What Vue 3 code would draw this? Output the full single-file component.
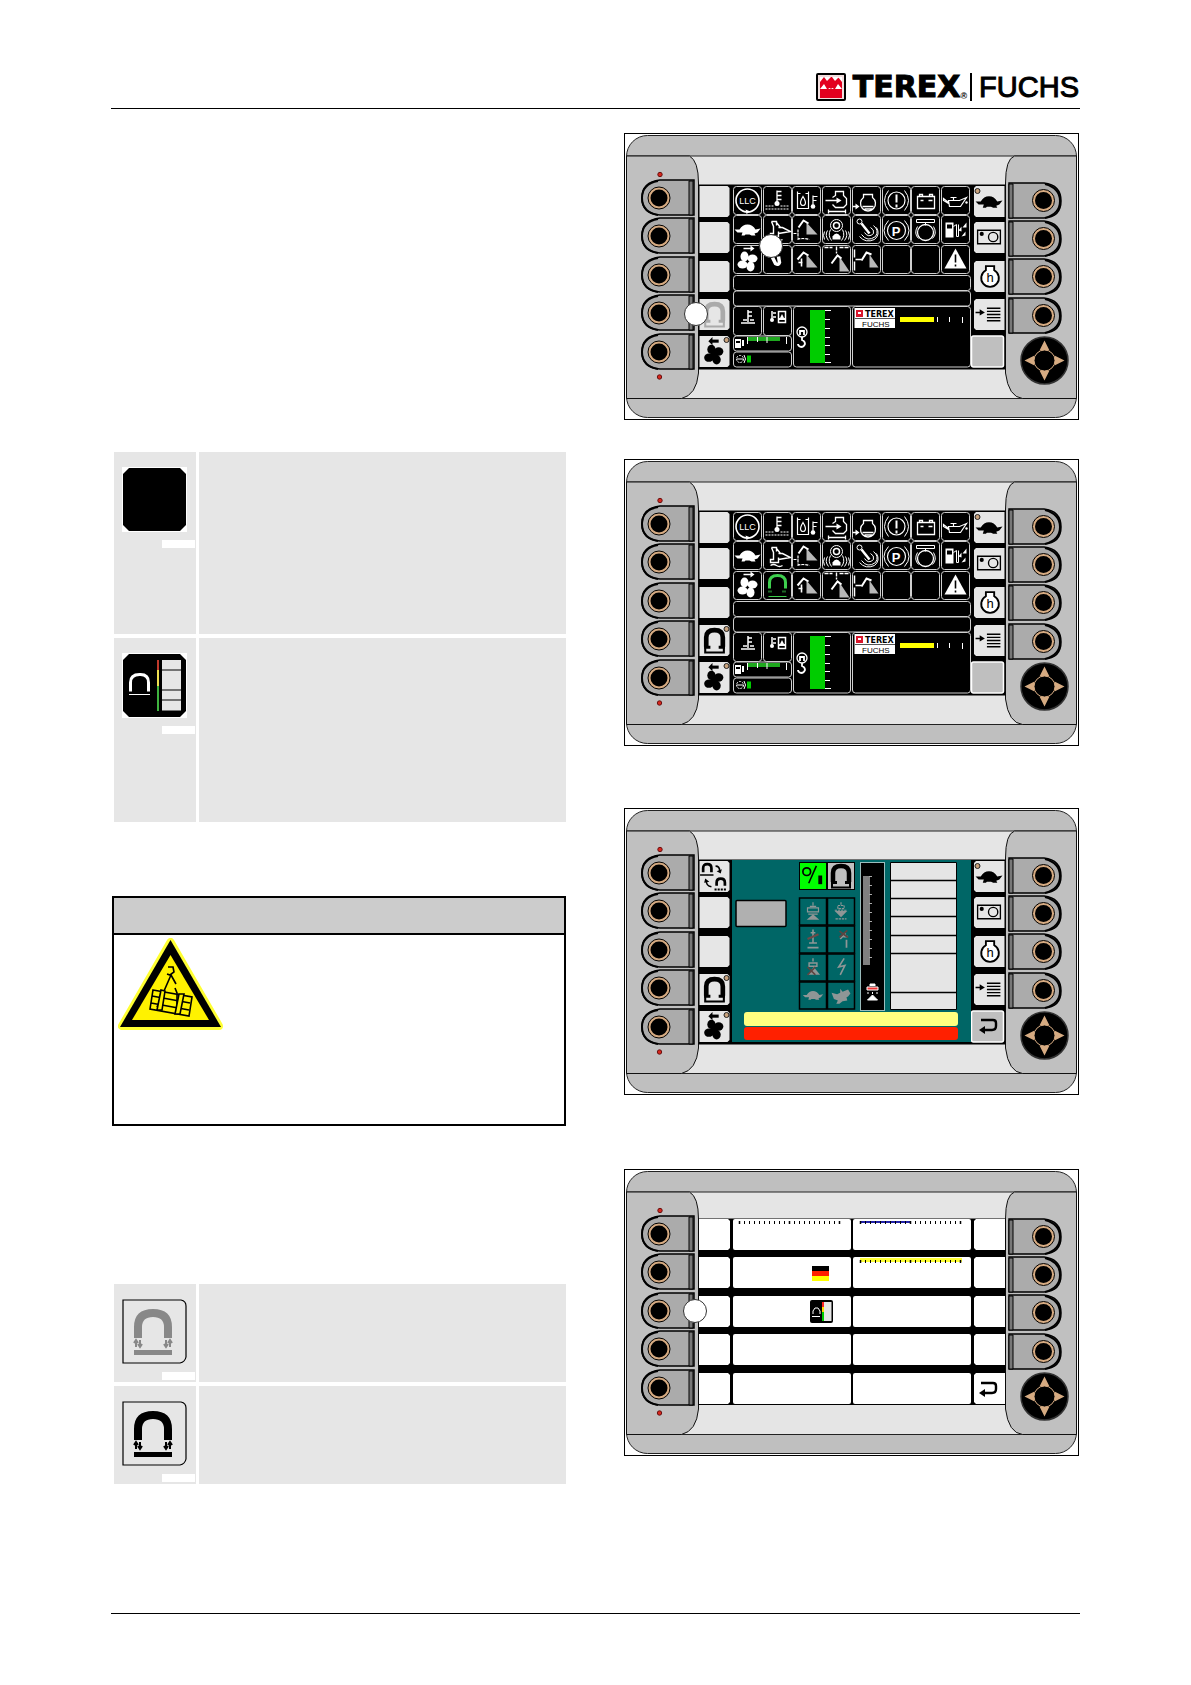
<template>
  <div class="page">
    <!-- 图标定义 -->
    <svg class="defs" aria-hidden="true">
      <symbol id="i-llc" viewBox="0 0 28 28">
        <circle cx="14" cy="14" r="11.500" class="ln" stroke-width="1.600" />
        <path d="M12 23l5 2-4 2.500z" class="fl" />
      </symbol>
      <symbol id="i-coolant" viewBox="0 0 28 28">
        <path d="M13.500 4v14M14 5h4M14 9h4M14 13h4" class="ln" stroke-width="1.300" />
        <circle cx="13.500" cy="17" r="2.500" class="fl" />
        <path d="M2 19.500h8M17 19.500h9M2 22.500h24" class="ln" stroke-dasharray="2 1" />
      </symbol>
      <symbol id="i-hyd" viewBox="0 0 28 28">
        <path d="M5 5v17h11V5M5 7h3M13 7h3M20.500 9v12M21 10h4M21 14h3" class="ln" stroke-width="1.200" />
        <path d="M10.500 10c-5 8-1 9 0 9s5-1 0-9z" class="ln" stroke-width="1.200" />
        <circle cx="20.500" cy="20" r="2.300" class="fl" />
      </symbol>
      <symbol id="i-engine" viewBox="0 0 28 28">
        <path d="M10 11l3-2V5h8v4l3 3v6l-3 3h-8l-3-3M3 14h12M6 25h17M6 23v4M23 23v4" class="ln" stroke-width="1.300" />
        <path d="M14 11l5 3-5 3z" class="fl" />
      </symbol>
      <symbol id="i-oillevel" viewBox="0 0 28 28">
        <path d="M11 8h9v3a7.500 7.500 0 1 1-9 0zM0 20h4M10 20h11M12 22.500h8" class="ln" stroke-width="1.300" />
        <path d="M3 17l4 3-4 3z" class="fl" />
      </symbol>
      <symbol id="i-brake" viewBox="0 0 28 28">
        <circle cx="14" cy="14" r="8.500" class="ln" stroke-width="1.200" />
        <path d="M6 4q-8 10 0 20M22 4q8 10 0 20" class="ln" />
        <path d="M14 8v8M14 18v3" class="ln" stroke-width="2" />
      </symbol>
      <symbol id="i-battery" viewBox="0 0 28 28">
        <path d="M6 10h17v12H6zM8 10V8h3v2M18 10V8h3v2M9 14h3M17 14h4" class="ln" stroke-width="1.300" />
      </symbol>
      <symbol id="i-oilcan" viewBox="0 0 28 28">
        <path d="M7 14h11l7-3-6 9H8zM7 16l-5-4v2l5 3M12 14v-3M9 11h6" class="ln" stroke-width="1.200" />
        <circle cx="25" cy="16" r="1.200" class="fl" />
      </symbol>
      <symbol id="i-turtle" viewBox="0 0 28 28">
        <path d="M1 14h5q3-5 8-5t8 5l5-1-3 4-3 1 1 2h-4l-2-1h-4l-1 1H8l1-3H4z" class="fl" />
      </symbol>
      <symbol id="i-hare" viewBox="0 0 28 28">
        <path d="M2 11l7 2 4-2 0-5 3 4 7-3 3 5-3 4-2 1 1 4-6 1-4 3-4 0 2-4-5-2z" class="fl" />
      </symbol>
      <symbol id="i-cab" viewBox="0 0 28 28">
        <path d="M8 6h5v4M8 6l2 5v7H7v3h8v-5M15 12h4l8 4-12 2M17 12l-4-5M7 24q3-2 6 0t6 0" class="ln" stroke-width="1.400" />
      </symbol>
      <symbol id="i-boom1" viewBox="0 0 28 28">
        <path d="M14 7l11 12H14z" fill="#b8b8b8" />
        <path d="M6 12l5-7 5 3" class="ln" stroke-width="2" />
        <path d="M5.500 14v9M1 18h5M5 24q5-2 12 0" class="ln" stroke-width="1.200" stroke-dasharray="3 1" />
      </symbol>
      <symbol id="i-boom2" viewBox="0 0 28 28">
        <path d="M14 9l11 13H14z" fill="#b8b8b8" />
        <path d="M5 14l6-7 5 3" class="ln" stroke-width="2" />
        <path d="M9 13v8M6 17h4" class="ln" stroke-width="1.600" />
      </symbol>
      <symbol id="i-boom3" viewBox="0 0 28 28">
        <path d="M17 11l10 15H17z" fill="#b8b8b8" />
        <path d="M9 18l6-8 4 3" class="ln" stroke-width="2" />
        <path d="M2 2h8M17 2h9M14 1v7" class="ln" stroke-width="1.400" stroke-dasharray="4 1" />
      </symbol>
      <symbol id="i-boom4" viewBox="0 0 28 28">
        <path d="M17 9l9 13H17z" fill="#b8b8b8" />
        <path d="M9 15l5-8 5 2" class="ln" stroke-width="2" />
        <path d="M2 4v8M2 16v9M3 14h6" class="ln" stroke-width="1.500" />
      </symbol>
      <symbol id="i-vibe" viewBox="0 0 28 28">
        <circle cx="14" cy="10" r="6" class="ln" />
        <circle cx="14" cy="10" r="3" class="ln" stroke-width="1.500" />
        <path d="M10 21q4-6 8 0v3h-8z" class="fl" />
        <path d="M8 14q-3 6 1 11M5 15q-3 5 1 10M2 16q-2 4 0 8M20 14q3 6-1 11M23 15q3 5-1 10M26 16q2 4 0 8" class="ln" />
      </symbol>
      <symbol id="i-joystick" viewBox="0 0 28 28">
        <circle cx="7" cy="6" r="2.500" class="ln" />
        <path d="M9 8l8 10" class="ln" stroke-width="2.500" />
        <path d="M18 12q4 2 3 6-5 5-9-1M21 10q6 5 2 11-8 6-14-2M24 12q4 7-2 12-9 4-15-3" class="ln" />
      </symbol>
      <symbol id="i-park" viewBox="0 0 28 28">
        <circle cx="14" cy="15" r="9" class="ln" stroke-width="1.200" />
        <path d="M6 5q-9 10 0 20M22 5q9 10 0 20" class="ln" />
      </symbol>
      <symbol id="i-swing" viewBox="0 0 28 28">
        <circle cx="14" cy="17" r="8" class="ln" stroke-width="1.300" />
        <path d="M5 4h18v3H5zM14 7v3M6 11q-4 7 1 12M22 11q4 7-1 12" class="ln" />
      </symbol>
      <symbol id="i-fuel" viewBox="0 0 28 28">
        <path d="M4 7h8v15H4zM17 15l3-4v5zM21 12l4-5v5zM20 21l4-5v4z" class="fl" />
        <path d="M5.500 9h5v4h-5z" fill="#000" />
        <path d="M12 11l3-2v12h2V9" class="ln" />
      </symbol>
      <symbol id="i-fan" viewBox="0 0 28 28">
        <g class="fl">
          <ellipse cx="11" cy="11" rx="4" ry="5" />
          <ellipse cx="19" cy="13" rx="5" ry="4" />
          <ellipse cx="17" cy="21" rx="4" ry="5" />
          <ellipse cx="9" cy="19" rx="5" ry="4" />
          <path d="M17 0l4 3-4 3z" />
        </g>
        <path d="M10 3h8" class="ln" stroke-width="1.500" />
      </symbol>
      <symbol id="i-fankey" viewBox="0 0 28 28">
        <g class="fl">
          <ellipse cx="12" cy="12" rx="4" ry="4.500" />
          <ellipse cx="19" cy="14" rx="4.500" ry="4" />
          <ellipse cx="17" cy="22" rx="4" ry="4.500" />
          <ellipse cx="9.500" cy="20" rx="4.500" ry="4" />
          <path d="M11 13l7-1 1 9-7 2zM9 4l4-4v8z" />
        </g>
        <path d="M12 4h7" class="ln" stroke-width="3" />
      </symbol>
      <symbol id="i-magnet" viewBox="0 0 28 28">
        <path d="M6 17v-6q0-7 8-7t8 7v6" class="ln" stroke-width="3" />
        <path d="M5 20h4M19 20h4" class="ln" stroke-width="2" stroke-dasharray="1 1" />
        <path d="M5 25h18" class="ln" />
      </symbol>
      <symbol id="i-grab" viewBox="0 0 28 28">
        <path d="M9 12l3 6q3 2 4-1l-1-6" class="ln" stroke-width="3.500" />
      </symbol>
      <symbol id="i-magnetkey" viewBox="0 0 28 28">
        <path d="M7 20V11q0-7 8-7t8 7v9" class="ln" stroke-width="4.500" />
        <path d="M5 25.500h20M6 19v6M24 19v6" class="ln" stroke-width="2" />
        <path d="M5 19h6v3H5zM19 19h6v3h-6z" class="fl" />
      </symbol>
      <symbol id="i-magnetswap" viewBox="0 0 28 28">
        <path d="M4 10V6q0-4 4-4t4 4v4M17 23v-3q0-4 4-4t4 4v3" class="ln" stroke-width="2.600" />
        <path d="M1 12.500h13M16 4q4 0 4 5M12 24q-5-1-5-6" class="ln" stroke-width="1.500" />
        <path d="M15 26.500h12" class="ln" stroke-width="2" stroke-dasharray="2 1" />
        <path d="M22 7l-1 4-4-2zM5 20l1-4 4 3z" class="fl" />
      </symbol>
      <symbol id="i-warn" viewBox="0 0 28 28">
        <path d="M14 3l11 20H3z" class="fl" />
        <path d="M14 9v8M14 19v2" stroke="#000" stroke-width="1.600" />
      </symbol>
      <symbol id="i-camera" viewBox="0 0 28 28">
        <path d="M3 7h22v13H3z" class="ln" stroke-width="1.300" />
        <circle cx="18" cy="13.500" r="4.500" class="ln" stroke-width="1.300" />
        <circle cx="7" cy="10.500" r="2" class="fl" />
      </symbol>
      <symbol id="i-hours" viewBox="0 0 28 28">
        <path d="M11 4h8v4a8.500 8.500 0 1 1-8 0z" fill="#fff" stroke="#000" stroke-width="1.800" />
      </symbol>
      <symbol id="i-list" viewBox="0 0 28 28">
        <path d="M12 8h13M12 11h13M12 14h13M12 17h13M12 20h13" class="ln" stroke-width="1.300" />
        <path d="M1 12h5" class="ln" stroke-width="1.500" />
        <path d="M5 9l5 3-5 3z" class="fl" />
      </symbol>
      <symbol id="i-back" viewBox="0 0 28 28">
        <path d="M7 8h12q3 0 3 3v3q0 4-4 4H10" class="ln" stroke-width="2.400" />
        <path d="M5 18l6-4v8z" class="fl" />
      </symbol>
      <symbol id="i-hook" viewBox="0 0 28 28">
        <circle cx="14" cy="9" r="5" class="ln" stroke-width="1.300" />
        <path d="M12 12V8h4v4M14 14v3q3 1 3 4-1 3-4 3-3-1-3-3" class="ln" stroke-width="1.800" />
      </symbol>
      <symbol id="i-plateup" viewBox="0 0 28 28">
        <path d="M14 3v4M10 8h8M7 10h14v5H7zM8 18h12" class="ln" stroke-width="1.500" />
        <path d="M14 18l8 7H6z" class="fl" />
      </symbol>
      <symbol id="i-platedown" viewBox="0 0 28 28">
        <path d="M14 3v3M10 7h8v4h-8zM6 13h16M7 24h14" class="ln" stroke-width="1.500" stroke-dasharray="3 1" />
        <path d="M6 14h16l-8 8z" class="fl" />
      </symbol>
      <symbol id="i-post" viewBox="0 0 28 28">
        <path d="M14 2v18M11 6h6M9 19h10M7 25h14" class="ln" stroke-width="2" />
        <path d="M7 14l14-6" stroke="#6b4a48" stroke-width="3" />
      </symbol>
      <symbol id="i-cross" viewBox="0 0 28 28">
        <path d="M13 14l7-7M21 15v10M17 11h6" class="ln" stroke-width="2.200" />
        <path d="M12 4l11 8M22 3L12 12" stroke="#5e4440" stroke-width="2.200" />
      </symbol>
      <symbol id="i-cross2" viewBox="0 0 28 28">
        <path d="M14 3v4M9 9h10v4H9z" class="ln" stroke-width="1.800" />
        <path d="M15 14l8 10H7z" class="fl" />
        <path d="M7 14l10 10M17 14L7 24" stroke="#5e4440" stroke-width="2" />
      </symbol>
      <symbol id="i-bolt" viewBox="0 0 28 28">
        <path d="M18 3l-7 11 8-2-6 12" class="ln" stroke-width="2" />
      </symbol>
      <symbol id="i-percent" viewBox="0 0 28 28">
        <circle cx="7" cy="10" r="4" class="ln" stroke-width="1.800" />
        <path d="M17 4L9 22" class="ln" stroke-width="1.600" />
        <path d="M19 14h4v9h-4z" class="fl" />
      </symbol>
    </svg>

    <header class="header">
      <svg class="logo-mark" viewBox="0 0 30 28" role="img" aria-label="Logo">
        <rect x="1" y="1" width="28" height="26" rx="1" fill="#f2dede" stroke="#000" stroke-width="2" />
        <path d="M4 4h22v21H4z" fill="#e3001f" />
        <path d="M4 4h4l-4 5zM11 8l4-4h-7zM19 8l4-4h-7zM26 4v5l-4-5zM4 16l4-5 3 5zM12 16h6l-3-2zM19 16l3-5 4 5z" fill="#fff" />
        <path d="M9 11l6-6 6 6-6 5z" fill="#e3001f" />
      </svg>
      <span class="logo-terex">TEREX</span>
      <span class="logo-reg">®</span>
      <span class="logo-fuchs">FUCHS</span>
    </header>

    <main class="content">
      <section class="col-left">
        <div class="table table-top">
          <div class="row" v-for="kind in ['blank', 'gauge']" :key="kind">
            <div class="cell-icon">
              <svg class="tile" viewBox="0 0 65 65">
                <rect width="65" height="65" fill="#fff" />
                <path d="M7 1h51l6 6v51l-6 6H7l-6-6V7z" />
                <g v-if="kind === 'gauge'">
                  <path d="M8.500 38.500v-9q0-8 9-8h1q8 0 8 8v9" fill="none" stroke="#fff" stroke-width="3" />
                  <path d="M7 41.500h21" stroke="#fff" />
                  <path d="M36 7v10" stroke="#c0392b" stroke-width="2" />
                  <path d="M36 17v16" stroke="#f0e050" stroke-width="2" />
                  <path d="M36 33v25" stroke="#3fb33f" stroke-width="2" />
                  <path d="M40 7h19v9.500H40zM40 17.500h19v19H40zM40 37.500h19v9H40zM40 47.500h19v10H40z" fill="#e6e6e6" />
                </g>
              </svg>
              <span class="tag"></span>
            </div>
            <div class="cell-text"></div>
          </div>
        </div>

        <div class="warning">
          <div class="warning-head"></div>
          <div class="warning-body">
            <svg class="hazard" viewBox="0 0 105 93" role="img" aria-label="Suspended load">
              <path d="M52.500 4L4 88h97z" fill="#ff3" stroke="#ff3" stroke-width="8" stroke-linejoin="round" />
              <path d="M52.500 2L2 89h101z" />
              <path d="M52.500 17L14 82h77z" fill="#fff200" />
              <g fill="none" stroke="#000" stroke-width="1.600">
                <path d="M50 29h5l1 5-4 3-3-1M53 37l-14 32M53 37l5 9M57 50l2 5v17" />
                <path d="M35 52l39 7-3 19-39-7zM34 58l38 7M33 65l38 7" />
                <path d="M43 52l-4 20h5l3-19zM61 56l-4 20h5l4-20z" fill="#fff200" />
              </g>
            </svg>
          </div>
        </div>

        <div class="table table-bottom">
          <div class="row" v-for="color in ['#888888', '#000000']" :key="color">
            <div class="cell-icon">
              <svg class="tile" viewBox="0 0 65 65">
                <path d="M1 1h58q5 1 5 6v51q-1 5-6 6H1z" fill="#e6e6e6" stroke="#000" stroke-width="1.200" />
                <path d="M16 39V28q0-14 15-14t15 14v11" fill="none" :stroke="color" stroke-width="8" />
                <path d="M12 51h38v5H12z" :fill="color" />
                <path d="M14 48v-6m-2 2l2-3 2 3M18 41v6m-2-2l2 3 2-3M44 41v6m-2-2l2 3 2-3M48 48v-6m-2 2l2-3 2 3" fill="none" :stroke="color" stroke-width="2" />
              </svg>
              <span class="tag"></span>
            </div>
            <div class="cell-text"></div>
          </div>
        </div>
      </section>

      <section class="col-right">
        <figure class="device" v-for="(dev, idx) in devices" :key="idx">
          <svg viewBox="0 0 455 287">
            <rect x="0.500" y="0.500" width="454" height="286" fill="#fff" stroke="#000" />
            <!-- 机身 -->
            <rect x="2.500" y="2.500" width="450" height="282" rx="21" fill="#bfbfbf" stroke="#222" />
            <path d="M2.500 23v242.500h450V23z" fill="#e5e5e5" stroke="#222" />
            <path d="M2.500 23h63q9 5 9 27v190q-2 22-17 25.500h-55z" fill="#c0c0c0" stroke="#111" />
            <path d="M452.500 23h-62q-9 3-9 27v190q3 24 17 25.500h54z" fill="#c0c0c0" stroke="#111" />
            <circle cx="36" cy="41.500" r="2.200" fill="#d8261c" stroke="#611" />
            <circle cx="35.500" cy="244" r="2.200" fill="#d8261c" stroke="#611" />

            <!-- 左侧按键 -->
            <g v-for="n in 5" :key="'l' + n" :transform="`translate(17 ${Math.floor(47.5 + (n - 1) * 38.4)})`">
              <path d="M53 0H19Q1 2 1 18t18 17h34z" fill="#ababab" stroke="#000" stroke-width="1.500" />
              <path d="M17 1Q1 4 1 18t16 17" fill="none" stroke="#000" stroke-width="2" />
              <path d="M48 1h4v34h-4z" fill="#777" stroke="#000" />
              <circle cx="18" cy="18" r="11" fill="#d6ab82" stroke="#000" />
              <circle cx="18" cy="18" r="8.500" />
            </g>
            <!-- 右侧按键 -->
            <g v-for="n in 4" :key="'r' + n" :transform="`translate(384 ${Math.floor(50 + (n - 1) * 38.4)})`">
              <path d="M1 0h35q17 2 17 18T36 35H1z" fill="#ababab" stroke="#000" stroke-width="1.500" />
              <path d="M37 1q15 4 15 17T37 35" fill="none" stroke="#000" stroke-width="2" />
              <path d="M1 1h4v34H1z" fill="#777" stroke="#000" />
              <circle cx="35.500" cy="17.500" r="11" fill="#d6ab82" stroke="#000" />
              <circle cx="35.500" cy="17.500" r="8.500" />
            </g>
            <!-- 摇杆 -->
            <g transform="translate(420.500 227.500)">
              <circle r="23.500" stroke="#333" stroke-width="1.500" />
              <path d="M0-20l5 10H-5zM0 20l5-10H-5zM-20 0l10-5V5zM20 0l-10-5V5z" fill="#d6ab82" />
              <circle r="10.500" stroke="#d6ab82" />
            </g>

            <rect x="74.500" :y="dev.type === 'menu' ? 49.5 : 51.5" width="307" :height="dev.type === 'menu' ? 186.5 : 185" />

            <template v-if="dev.type !== 'menu'">
              <g v-for="(y, k) in keyRows" :key="'k' + k">
                <path :d="`M75.500 ${y}h28l2 2v27l-2 2h-28z`" fill="#e6e6e6" />
                <use v-if="dev.keys[k]" :href="'#i-' + dev.keys[k]" x="75" :y="y + 1" width="29" height="29" :class="{ off: dev.faded && k === 3 }" />
                <circle v-if="k === 4 || (k === 3 && !dev.faded)" cx="102.500" :cy="y + 4" r="2.500" fill="#c9a27c" stroke="#222" />
                <template v-if="k < 4">
                  <path :d="`M380.500 ${y}h-28.500l-2 2v27l2 2h28.500z`" fill="#e6e6e6" />
                  <use :href="'#i-' + rightKeys[k]" x="350.500" :y="y + 1" width="29" height="29" />
                </template>
              </g>
              <text x="366" y="149" class="hours">h</text>
              <circle cx="353.500" cy="58" r="2.500" fill="#c9a27c" stroke="#222" />
              <rect x="347.500" y="203" width="32" height="31" rx="2" fill="#bfbfbf" stroke="#fff" stroke-width="1.500" />
              <use v-if="dev.type === 'load'" href="#i-back" x="350" y="204" width="28" height="28" />
            </template>

            <!-- 主界面 -->
            <g v-if="dev.type === 'main'" class="white">
              <g v-for="(icon, i) in mainIcons" :key="i">
                <rect :x="cellX(i)" :y="cellY(i)" width="28" height="28" rx="3" class="frame" />
                <use
                  v-if="icon"
                  :href="'#i-' + (icon === 'magnet' && dev.faded ? 'grab' : icon)"
                  :x="cellX(i)"
                  :y="cellY(i)"
                  width="28"
                  height="28"
                  :class="{ green: icon === 'magnet' && !dev.faded }"
                />
              </g>
              <text x="123.500" y="71" class="llc">LLC</text>
              <text x="272" y="102.500" class="park">P</text>
              <g class="frame">
                <rect x="109.500" y="142.500" width="237" height="15" rx="3" />
                <rect x="109.500" y="158" width="237" height="15" rx="3" />
                <rect x="109.500" y="173.500" width="28" height="29" rx="3" />
                <rect x="139.500" y="173.500" width="28" height="29" rx="3" />
                <rect x="109.500" y="203" width="58" height="15" rx="3" />
                <rect x="109.500" y="219" width="58" height="15" rx="3" />
                <rect x="169.500" y="173.500" width="57" height="60.500" rx="3" />
                <rect x="228.500" y="173.500" width="118" height="60.500" rx="3" />
              </g>
              <path d="M124 177v12M124 179h4M124 183h4M117 190h14M119 187h4M126 187h4" class="ln" stroke-width="1.500" />
              <path d="M148 178v10M149 180h3M149 184h3" class="ln" stroke-width="1.500" />
              <circle cx="148" cy="187" r="2" class="fl" />
              <path d="M154.500 178.500h7v11h-7z" class="ln" stroke-width="1.500" />
              <path d="M158 181l2 4h-4zM155 185h6v2h-6z" class="fl" />
              <path d="M111 206h6v9h-6zM118 207h2v6h-2z" class="fl" />
              <path d="M112 208h4v2h-4z" fill="#000" />
              <path d="M123 204h33v4h-33z" fill="#1fa81f" />
              <path d="M123.500 204v7M133.500 204v5M143 204v6M162.500 204v7" class="ln" />
              <circle cx="116" cy="226" r="3.500" class="ln" stroke-dasharray="2 1" />
              <path d="M120 222q3 4 0 8M113 226h6" class="ln" />
              <path d="M123 222.500h4v7h-4z" fill="#0c0" />
              <use href="#i-hook" x="164" y="190" width="28" height="28" />
              <path d="M186 177h15v53h-15z" fill="#0c0" />
              <path d="M201 177.500h6M201 186.500h5M201 195.500h5M201 204.500h5M201 212.500h5M201 221.500h5M201 229.500h6" class="ln" />
              <path d="M230.500 175h40.500v20h-40.500z" fill="#fff" />
              <path d="M231 185.500h40" stroke="#555" />
              <path d="M232 177h7v7h-7z" fill="#d9162c" />
              <path d="M234 179h3v2h-3z" fill="#fff" />
              <text x="241" y="183.500" class="mini-terex">TEREX</text>
              <text x="238" y="193.500" class="mini-fuchs">FUCHS</text>
              <path d="M276 184h34v5h-34z" fill="#ff0" />
              <path d="M313.500 184v5M325.500 184v5M338.500 184v6" class="ln" />
            </g>

            <!-- 磁盘界面 -->
            <g v-if="dev.type === 'load'">
              <path d="M108 52h239v182H108z" fill="#006666" />
              <rect x="112" y="92.500" width="50" height="26" rx="1" fill="#b0b0b0" stroke="#000" stroke-width="1.500" />
              <rect x="175.500" y="54.500" width="27" height="27" fill="#0f0" stroke="#000" />
              <use href="#i-percent" x="176" y="54" width="27" height="27" />
              <rect x="203.500" y="54.500" width="27" height="27" fill="#bfbfbf" stroke="#000" />
              <use href="#i-magnetkey" x="202" y="54" width="28" height="28" />
              <g v-for="(icon, i) in loadIcons" :key="i" class="dim">
                <rect :x="175.5 + (i % 2) * 28" :y="90 + Math.floor(i / 2) * 28" width="27" height="27" fill="none" stroke="#000" stroke-width="1.500" />
                <use :href="'#i-' + icon" :x="178 + (i % 2) * 28" :y="92 + Math.floor(i / 2) * 28" width="22" height="22" />
              </g>
              <rect x="236.500" y="54.500" width="24" height="148" stroke="#9bbcbc" />
              <path d="M239 68h7v89h-7z" fill="#808080" />
              <path v-for="n in 10" :key="n" :d="`M245 ${59.5 + n * 9}h3`" stroke="#aaa" />
              <path d="M243 179h11v3h-11z" fill="#e33" stroke="#fff" />
              <path d="M246 178v-2h5v2M244 184v2M248.500 184v2M253 184v2M248.500 187l5 5h-10z" fill="#fff" stroke="#fff" />
              <path d="M266.500 54.500h66v147h-66z" fill="#e5e5e5" stroke="#000" />
              <path d="M266 72.500h67M266 90.500h67M266 108.500h67M266 127.500h67M266 145.500h67M266 184.500h67" stroke="#000" stroke-width="1.500" />
              <rect x="120" y="204" width="214" height="14" rx="3" fill="#ffff80" />
              <rect x="120" y="219" width="214" height="13" rx="3" fill="#ff2000" />
            </g>

            <!-- 菜单界面 -->
            <g v-if="dev.type === 'menu'">
              <template v-for="y in menuRows" :key="y">
                <path :d="`M75 ${y}h29l2 2v27l-2 2H75z`" fill="#fff" />
                <rect x="109" :y="y" width="118" height="31" rx="2" fill="#fff" />
                <rect x="229" :y="y" width="118" height="31" rx="2" fill="#fff" />
                <path :d="`M381 ${y}h-29l-2 2v27l2 2h29z`" fill="#fff" />
              </template>
              <path d="M236 52h51v2h-51z" fill="#2020a8" />
              <path d="M236 89h102v4h-102z" fill="#ff3" />
              <template v-for="n in 21" :key="n">
                <path :d="`M${110.5 + n * 5} 52v3M${231.5 + n * 5} 52v3M${231.5 + n * 5} 91v3`" stroke="#000" :stroke-width="n === 1 || n === 11 || n === 21 ? 1.5 : 1" />
              </template>
              <path d="M188 97h17v5h-17z" />
              <path d="M188 102h17v5h-17z" fill="#ff2000" />
              <path d="M188 107h17v5h-17z" fill="#ff0" />
              <rect x="186" y="131" width="23" height="23" rx="2" />
              <path d="M200 133h7.500v19H200z" fill="#e5e5e5" />
              <path d="M198 133h2v5h-2z" fill="#f22" />
              <path d="M198 138h2v5h-2z" fill="#fd0" />
              <path d="M198 143h2v9h-2z" fill="#0c0" />
              <path d="M189 145v-3l2-3h3l2 3v3M188 147.500h8" fill="none" stroke="#fff" />
              <use href="#i-back" x="350" y="206" width="28" height="28" />
            </g>

            <circle v-for="(c, i) in dev.callouts" :key="'c' + i" :cx="c[0]" :cy="c[1]" r="11.500" fill="#fff" stroke="#333" />
          </svg>
        </figure>
      </section>
    </main>
    <footer class="footer"></footer>
  </div>
</template>

<script setup>
// 四个显示屏
const devices = [
  { type: 'main', faded: true, keys: ['', '', '', 'magnetkey', 'fankey'], callouts: [[72, 181], [147, 113]] },
  { type: 'main', faded: false, keys: ['', '', '', 'magnetkey', 'fankey'], callouts: [] },
  { type: 'load', faded: false, keys: ['magnetswap', '', '', 'magnetkey', 'fankey'], callouts: [] },
  { type: 'menu', faded: false, keys: [], callouts: [[71, 142]] }
]

const keyRows = [53, 89, 128, 166, 203]
const menuRows = [50, 88, 127, 165, 204]
const rightKeys = ['turtle', 'camera', 'hours', 'list']

// 8列3行的指示图标
const mainIcons = [
  'llc', 'coolant', 'hyd', 'engine', 'oillevel', 'brake', 'battery', 'oilcan',
  'turtle', 'cab', 'boom1', 'vibe', 'joystick', 'park', 'swing', 'fuel',
  'fan', 'magnet', 'boom2', 'boom3', 'boom4', '', '', 'warn'
]
const loadIcons = ['plateup', 'platedown', 'post', 'cross', 'cross2', 'bolt', 'turtle', 'hare']

const cellX = (i) => 109.5 + Math.round((i % 8) * 29.7)
const cellY = (i) => 53.5 + Math.round(Math.floor(i / 8) * 29.4)
</script>

<style>
body {
  margin: 0;
  background: #ffffff;
}
</style>

<style scoped>
.page {
  padding: 72px 111px;
  font-family: "Liberation Sans", Arial, sans-serif;
  color: #000000;
}

.defs {
  display: block;
  width: 0;
  height: 0;
}

/* 页眉 */
.header {
  display: flex;
  align-items: center;
  justify-content: flex-end;
  height: 37px;
  padding-right: 1px;
  border-bottom: 1px solid #000000;
  box-sizing: border-box;
  line-height: 28px;
}

.logo-mark {
  width: 30px;
  height: 28px;
  margin-right: 7px;
  margin-bottom: 6px;
}

.logo-terex {
  margin-bottom: 6px;
  font-family: "DejaVu Sans", sans-serif;
  font-size: 30px;
  font-weight: bold;
  -webkit-text-stroke: 1px #000000;
}

.logo-reg {
  align-self: flex-end;
  margin-bottom: 4px;
  font-size: 9px;
  font-weight: bold;
  line-height: 16px;
}

.logo-fuchs {
  margin-bottom: 6px;
  margin-left: 3px;
  padding-left: 7px;
  border-left: 2px solid #000000;
  font-size: 29px;
  -webkit-text-stroke: 1px #000000;
}

/* 两栏布局 */
.content {
  display: grid;
  grid-template-columns: 1fr 1fr;
  gap: 58px;
  padding: 24px 1px 0 0;
}

.col-left {
  padding-top: 319px;
}

.table {
  display: flex;
  flex-direction: column;
  gap: 4px;
  padding-left: 3px;
}

.row {
  display: grid;
  grid-template-columns: 82px 1fr;
  gap: 3px;
}

.table-top .row {
  height: 182px;
}

.table-top .row:last-child {
  height: 184px;
}

.table-bottom .row {
  height: 98px;
}

.cell-icon {
  display: flex;
  flex-direction: column;
  gap: 8px;
  padding: 15px 1px 0 8px;
  background: #e6e6e6;
}

.cell-text {
  background: #e6e6e6;
}

.tile {
  width: 65px;
  height: 65px;
}

.tag {
  align-self: flex-end;
  width: 33px;
  height: 8px;
  background: #ffffff;
}

/* 警告框 */
.warning {
  margin: 74px 0 158px 1px;
  border: 2px solid #000000;
}

.warning-head {
  height: 35px;
  border-bottom: 2px solid #000000;
  background: #cccccc;
}

.warning-body {
  min-height: 186px;
  padding: 3px 4px 0;
}

.hazard {
  display: block;
  width: 105px;
  height: 93px;
}

/* 设备图 */
.device {
  margin: 0 0 39px;
}

.device svg {
  display: block;
  width: 100%;
}

.device:nth-child(2) {
  margin-bottom: 62px;
}

.device:nth-child(3) {
  margin-bottom: 74px;
}

.ln {
  fill: none;
  stroke: currentColor;
}

.fl {
  fill: currentColor;
}

.white {
  color: #ffffff;
}

.green {
  color: #3ecf4e;
}

.off {
  color: #aaaaaa;
}

.dim {
  color: #8f9696;
}

.frame {
  fill: none;
  stroke: #cfcfcf;
}

.llc {
  font-size: 9px;
  text-anchor: middle;
  fill: currentColor;
}

.park {
  font-size: 13px;
  font-weight: bold;
  text-anchor: middle;
  fill: currentColor;
}

.hours {
  font-size: 13px;
  text-anchor: middle;
}

.mini-terex {
  font-family: "DejaVu Sans", sans-serif;
  font-size: 8px;
  font-weight: bold;
}

.mini-fuchs {
  font-size: 8px;
}

.footer {
  margin-top: 118px;
  border-top: 1px solid #000000;
}
</style>
